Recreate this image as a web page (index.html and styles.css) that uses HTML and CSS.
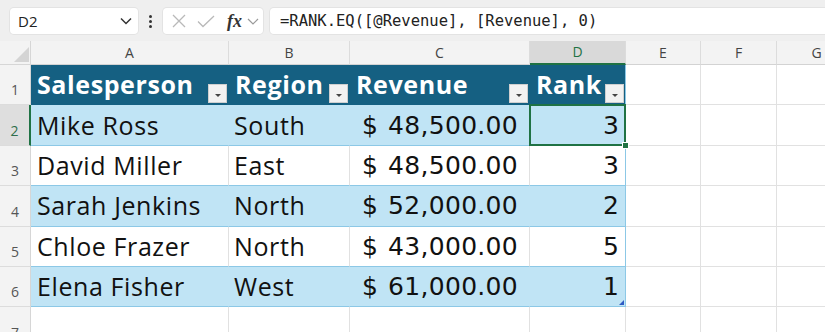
FILE: index.html
```html
<!DOCTYPE html>
<html>
<head>
<meta charset="utf-8">
<link rel="stylesheet" href="styles.css">
</head>
<body>
<div class="toolbar">
  <div class="namebox"><span>D2</span>
    <svg class="chev" width="12" height="8" viewBox="0 0 12 8"><polyline points="1,1.5 6,6.5 11,1.5" fill="none" stroke="#333" stroke-width="1.5"/></svg>
  </div>
  <div class="grip"><span></span><span></span><span></span></div>
  <div class="fxbox">
    <svg class="ic-x" width="14" height="14" viewBox="0 0 14 14"><path d="M1 1 L13 13 M13 1 L1 13" stroke="#b9b9b9" stroke-width="1.3" fill="none"/></svg>
    <svg class="ic-ok" width="18" height="13" viewBox="0 0 18 13"><polyline points="1,6.5 6,11.5 17,1" stroke="#b9b9b9" stroke-width="1.3" fill="none"/></svg>
    <span class="fx">fx</span>
    <svg class="ic-chev" width="12" height="7" viewBox="0 0 12 7"><polyline points="1,1 6,6 11,1" fill="none" stroke="#9a9a9a" stroke-width="1.2"/></svg>
  </div>
  <div class="formula">=RANK.EQ([@Revenue], [Revenue], 0)</div>
</div>
<div class="sheet">
  <div class="c corner"><svg width="15" height="15" viewBox="0 0 15 15"><polygon points="15,0 15,15 0,15" fill="#d4d4d4"/></svg></div>
  <div class="c ch">A</div>
  <div class="c ch">B</div>
  <div class="c ch">C</div>
  <div class="c ch act">D</div>
  <div class="c ch">E</div>
  <div class="c ch">F</div>
  <div class="c ch">G</div>

  <div class="c rh">1</div>
  <div class="c th"><span>Salesperson</span><span class="fb"></span></div>
  <div class="c th"><span>Region</span><span class="fb"></span></div>
  <div class="c th"><span>Revenue</span><span class="fb"></span></div>
  <div class="c th last"><span>Rank</span><span class="fb"></span></div>
  <div class="c"></div><div class="c"></div><div class="c"></div>

  <div class="c rh act">2</div>
  <div class="c t b name">Mike Ross</div>
  <div class="c t b reg">South</div>
  <div class="c t b rev"><span>$</span><span>48,500.00</span></div>
  <div class="c t b rank last sel">3</div>
  <div class="c"></div><div class="c"></div><div class="c"></div>

  <div class="c rh">3</div>
  <div class="c t name">David Miller</div>
  <div class="c t reg">East</div>
  <div class="c t rev"><span>$</span><span>48,500.00</span></div>
  <div class="c t rank last">3</div>
  <div class="c"></div><div class="c"></div><div class="c"></div>

  <div class="c rh">4</div>
  <div class="c t b name">Sarah Jenkins</div>
  <div class="c t b reg">North</div>
  <div class="c t b rev"><span>$</span><span>52,000.00</span></div>
  <div class="c t b rank last">2</div>
  <div class="c"></div><div class="c"></div><div class="c"></div>

  <div class="c rh">5</div>
  <div class="c t name">Chloe Frazer</div>
  <div class="c t reg">North</div>
  <div class="c t rev"><span>$</span><span>43,000.00</span></div>
  <div class="c t rank last">5</div>
  <div class="c"></div><div class="c"></div><div class="c"></div>

  <div class="c rh">6</div>
  <div class="c t b name">Elena Fisher</div>
  <div class="c t b reg">West</div>
  <div class="c t b rev"><span>$</span><span>61,000.00</span></div>
  <div class="c t b rank last endmark">1</div>
  <div class="c"></div><div class="c"></div><div class="c"></div>

  <div class="c rh">7</div>
  <div class="c"></div><div class="c"></div><div class="c"></div><div class="c"></div>
  <div class="c"></div><div class="c"></div><div class="c"></div>
</div>
</body>
</html>
```
FILE: styles.css
```css
html, body {
  margin: 0;
  padding: 0;
  background: #fff;
  overflow: hidden;
}
body {
  font-family: "Open Sans", "Liberation Sans", sans-serif;
  color: #111;
}
.toolbar {
  display: flex;
  align-items: flex-start;
  height: 41px;
  box-sizing: border-box;
  padding: 8px 0 0 10px;
  background: #efefef;
}
.namebox {
  width: 128px;
  height: 26px;
  box-sizing: border-box;
  background: #fff;
  border-radius: 4px;
  box-shadow: 0 0 0 1px #e3e3e3;
  display: flex;
  align-items: center;
  justify-content: space-between;
  padding: 0 6px 0 8px;
  font-size: 15px;
  color: #222;
}
.grip {
  width: 25px;
  height: 26px;
  display: flex;
  flex-direction: column;
  align-items: center;
  justify-content: center;
  gap: 2px;
}
.grip span {
  width: 3px;
  height: 3px;
  border-radius: 50%;
  background: #333;
}
.fxbox {
  width: 100px;
  height: 26px;
  box-sizing: border-box;
  background: #fff;
  border-radius: 4px;
  box-shadow: 0 0 0 1px #e3e3e3;
  display: flex;
  align-items: center;
  padding-left: 9px;
}
.ic-ok { margin-left: 11px; }
.fx {
  margin-left: 12px;
  font-family: "Liberation Serif", serif;
  font-style: italic;
  font-weight: 700;
  font-size: 18px;
  color: #333;
  line-height: 1;
}
.ic-chev { margin-left: 5px; }
.formula {
  margin-left: 7px;
  flex: 1;
  height: 26px;
  background: #fff;
  border-radius: 4px 0 0 4px;
  box-shadow: 0 0 0 1px #e3e3e3;
  padding-left: 10px;
  font-family: "DejaVu Sans Mono", monospace;
  font-size: 15.5px;
  line-height: 26px;
  color: #222;
  white-space: nowrap;
}
.sheet {
  display: grid;
  grid-template-columns: 31px 198px 121px 180px 96px 75px 76px 80px;
  grid-template-rows: 24px repeat(7, 40.4px);
}
.c {
  box-sizing: border-box;
  border-right: 1px solid #e1e1e1;
  border-bottom: 1px solid #e1e1e1;
  display: flex;
  align-items: center;
  min-width: 0;
  font-size: 25px;
  line-height: 1;
  letter-spacing: 0.6px;
  white-space: nowrap;
}
.corner {
  background: #f3f3f3;
  border-color: #d6d6d6;
  align-items: flex-end;
  justify-content: flex-end;
  padding: 0 1px 2px 0;
}
.ch {
  background: #f3f3f3;
  border-right-color: #dcdcdc;
  border-bottom-color: #d3d3d3;
  justify-content: center;
  font-size: 14px;
  letter-spacing: 0;
  color: #444;
}
.ch.act {
  background: #d9d9d9;
  color: #1f7244;
  border-bottom: 2px solid #1f7244;
}
.rh {
  background: #f3f3f3;
  border-right-color: #d6d6d6;
  border-bottom-color: #dcdcdc;
  justify-content: center;
  align-items: flex-end;
  padding-bottom: 7px;
  font-size: 14px;
  line-height: 14px;
  letter-spacing: 0;
  color: #555;
}
.rh.act {
  background: #dedede;
  color: #2e6e4c;
  border-right: 2px solid #1f7244;
}
.th {
  background: #156082;
  border-right-color: #156082;
  border-bottom-color: #156082;
  color: #fff;
  font-weight: 700;
  justify-content: space-between;
  padding-left: 6px;
}
.fb {
  position: relative;
  align-self: flex-end;
  width: 19px;
  height: 19px;
  box-sizing: border-box;
  margin: 0 1px 1px 0;
  background: #f2f2f2;
  border: 1px solid #cfcfcf;
}
.fb::after {
  content: "";
  position: absolute;
  left: 6px;
  top: 9px;
  border-left: 3px solid transparent;
  border-right: 3px solid transparent;
  border-top: 3px solid #444;
}
.t { border-bottom-color: #8cc8e6; }
.b {
  background: #c0e4f5;
  border-right-color: #c0e4f5;
}
.last { border-right-color: #8cc8e6; }
.th.last { border-right-color: #8cc8e6; }
.name { padding-left: 6px; }
.reg { padding-left: 5px; }
.rev {
  justify-content: space-between;
  padding: 0 11px 0 12px;
  font-family: "DejaVu Sans", sans-serif;
  letter-spacing: 0.3px;
}
.rank {
  justify-content: flex-end;
  padding-right: 6px;
  font-family: "DejaVu Sans", sans-serif;
  letter-spacing: 0;
}
.sel {
  position: relative;
  z-index: 2;
}
.sel::after {
  content: "";
  position: absolute;
  left: -1px;
  top: -1px;
  right: -1px;
  bottom: -1px;
  border: 2px solid #1f7244;
}
.sel::before {
  content: "";
  position: absolute;
  right: -4px;
  bottom: -4px;
  width: 5px;
  height: 5px;
  background: #1f7244;
  border: 1px solid #fff;
  z-index: 3;
}
.endmark { position: relative; }
.endmark::after {
  content: "";
  position: absolute;
  right: 1px;
  bottom: 1px;
  border-left: 5px solid transparent;
  border-bottom: 5px solid #2f5bc4;
}
```
